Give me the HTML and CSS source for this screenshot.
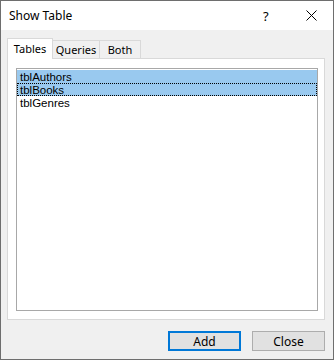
FILE: index.html
```html
<!DOCTYPE html>
<html lang="en">
<head>
  <meta charset="UTF-8">
  <link rel="stylesheet" href="styles.css">
  <title>Show Table</title>
</head>
<body>

<div class="window">
  <div class="titlebar">
    <span class="title">Show Table</span>
    <span class="help">?</span>
    <span class="close">
      <svg width="11" height="11" viewBox="0 0 11 11">
        <path d="M0.5 0.5 L10.5 10.5 M10.5 0.5 L0.5 10.5" stroke="#000" stroke-width="1"/>
      </svg>
    </span>
  </div>

  <div class="content">
    <div class="tabs">
      <div class="tab active tab-tables">Tables</div>
      <div class="tab tab-queries">Queries</div>
      <div class="tab tab-both">Both</div>
    </div>
    <div class="panel">
      <div class="listbox">
        <div class="item selected">tblAuthors</div>
        <div class="item selected focused">tblBooks</div>
        <div class="item">tblGenres</div>
      </div>
    </div>
    <div class="buttons">
      <button class="btn default">Add</button>
      <button class="btn">Close</button>
    </div>
  </div>
</div>

</body>
</html>
```
FILE: styles.css
```css
body {
  margin: 0;
  font-family: 'Noto Sans', 'DejaVu Sans', sans-serif;
  font-size: 12px;
  color: #000;
  background: #fff;
}

.window {
  box-sizing: border-box;
  width: 334px;
  height: 360px;
  border: 1px solid #6e6e6e;
  background-color: #f0f0f0;
  display: flex;
  flex-direction: column;
}

.titlebar {
  height: 29px;
  background-color: #fff;
  display: flex;
  align-items: center;
  font-size: 12px;
}

.title {
  margin-left: 8px;
  flex: 1;
}

.help {
  width: 12px;
  margin-right: 31px;
  font-size: 13px;
}

.close {
  display: flex;
  margin-right: 16px;
}

.content {
  flex: 1;
  padding: 8px 8px 0 6px;
  display: flex;
  flex-direction: column;
}

.tabs {
  display: flex;
  align-items: flex-end;
  height: 20px;
  position: relative;
  z-index: 1;
  font-size: 11px;
}

.tab {
  box-sizing: border-box;
  height: 18px;
  border: 1px solid #d9d9d9;
  border-bottom: none;
  border-left: none;
  background-color: #f0f0f0;
  line-height: 17px;
  text-align: center;
}

.tab.active {
  height: 21px;
  margin-bottom: -1px;
  background-color: #fff;
  border-left: 1px solid #d9d9d9;
  line-height: 19px;
}

.tab-tables {
  width: 46px;
}

.tab-queries {
  width: 47px;
}

.tab-both {
  width: 41px;
}

.panel {
  box-sizing: border-box;
  height: 262px;
  border: 1px solid #d9d9d9;
  background-color: #fff;
  padding: 9px 6px 8px 8px;
}

.listbox {
  box-sizing: border-box;
  height: 100%;
  border: 1px solid #a8a8a8;
  padding-top: 1px;
  font-family: 'Liberation Sans', Arial, sans-serif;
  font-size: 11.5px;
}

.item {
  box-sizing: border-box;
  height: 13px;
  line-height: 12px;
  padding-left: 2px;
  border: 1px solid transparent;
}

.item.selected {
  background-color: #99c9ef;
}

.item.focused {
  border: 1px dotted #000;
}

.buttons {
  display: flex;
  justify-content: flex-end;
  gap: 11px;
  margin-top: 11px;
}

.btn {
  box-sizing: border-box;
  width: 73px;
  height: 20px;
  padding: 0;
  border: 1px solid #adadad;
  background-color: #e1e1e1;
  font-family: 'Noto Sans', 'DejaVu Sans', sans-serif;
  font-size: 12px;
  color: #000;
}

.btn.default {
  border: 2px solid #0078d7;
}
```
